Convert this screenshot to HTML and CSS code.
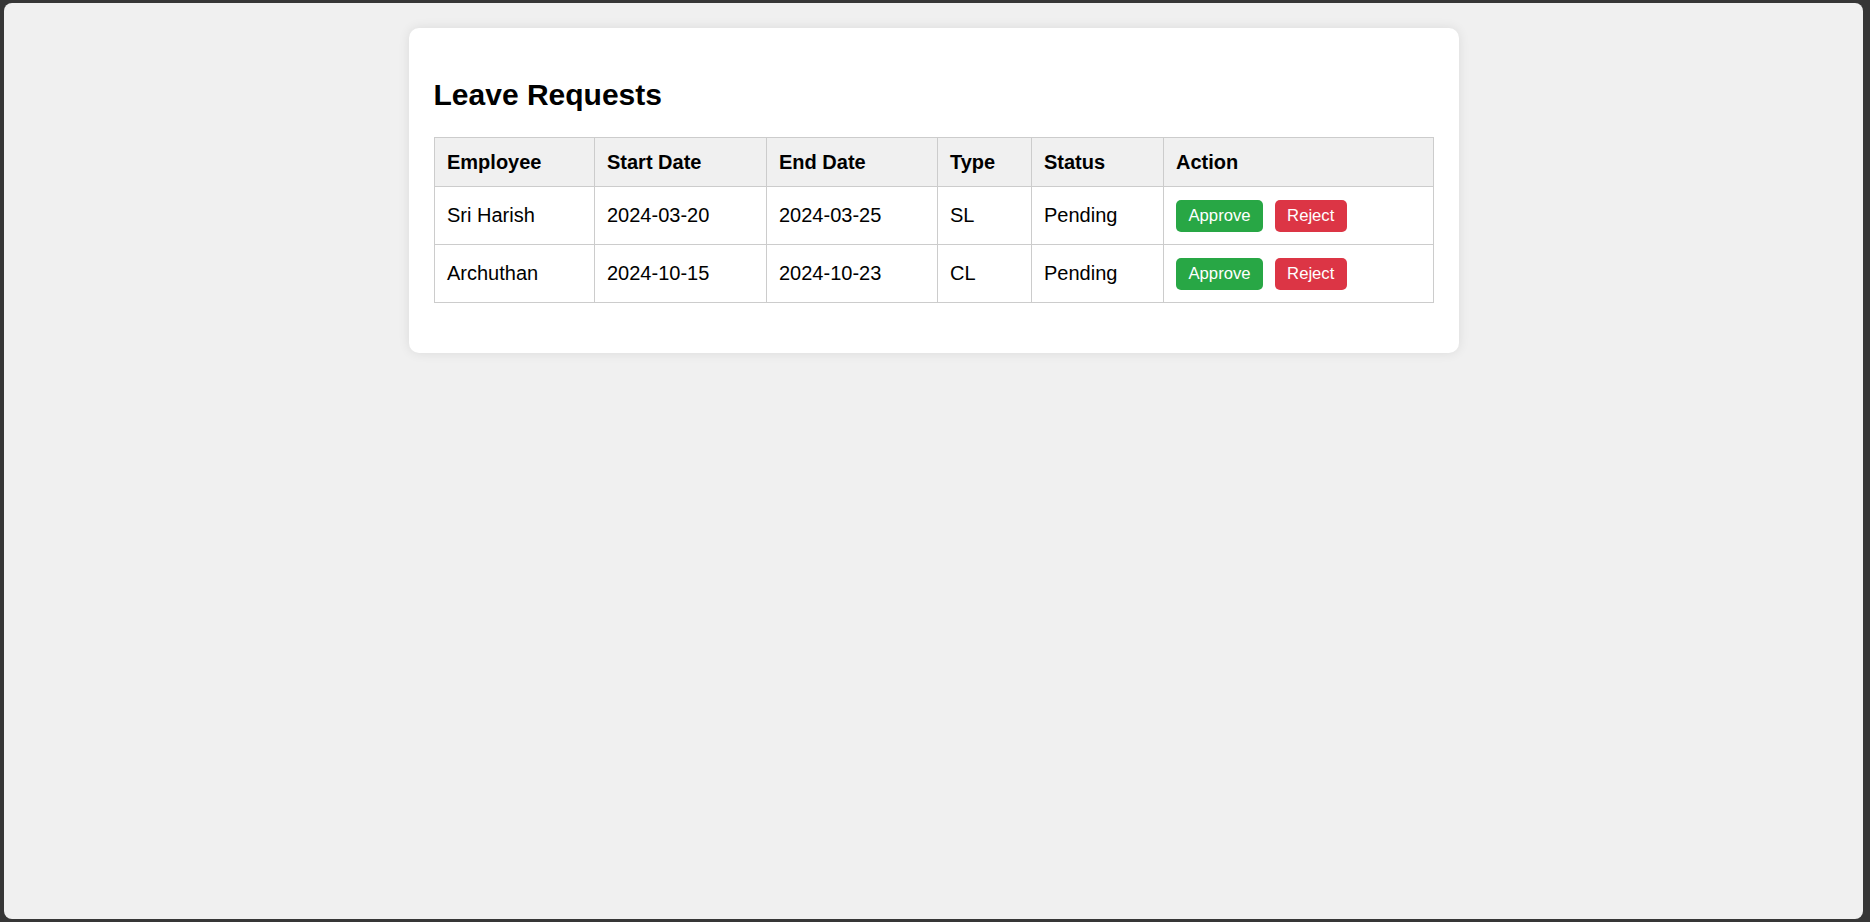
FILE: index.html
```html
<!DOCTYPE html>
<html lang="en">
<head>
<meta charset="utf-8">
<title>Leave Requests</title>
<link rel="stylesheet" href="styles.css">
</head>
<body>
<div class="frame">
  <div class="card">
    <h2 class="title">Leave Requests</h2>
    <table class="requests">
      <colgroup>
        <col class="c-emp">
        <col class="c-start">
        <col class="c-end">
        <col class="c-type">
        <col class="c-status">
        <col class="c-action">
      </colgroup>
      <thead>
        <tr>
          <th>Employee</th>
          <th>Start Date</th>
          <th>End Date</th>
          <th>Type</th>
          <th>Status</th>
          <th>Action</th>
        </tr>
      </thead>
      <tbody>
        <tr>
          <td>Sri Harish</td>
          <td>2024-03-20</td>
          <td>2024-03-25</td>
          <td>SL</td>
          <td>Pending</td>
          <td><button class="btn btn-approve">Approve</button> <button class="btn btn-reject">Reject</button></td>
        </tr>
        <tr>
          <td>Archuthan</td>
          <td>2024-10-15</td>
          <td>2024-10-23</td>
          <td>CL</td>
          <td>Pending</td>
          <td><button class="btn btn-approve">Approve</button> <button class="btn btn-reject">Reject</button></td>
        </tr>
      </tbody>
    </table>
  </div>
</div>
</body>
</html>
```

FILE: styles.css
```css
html, body {
  margin: 0;
  padding: 0;
  height: 100%;
  background: #363636;
}

body {
  padding: 3px 7px 3px 4px;
  box-sizing: border-box;
  font-family: "Liberation Sans", Arial, sans-serif;
}

.frame {
  height: 100%;
  background: #f0f0f0;
  border-radius: 8px;
  padding-top: 25px;
  box-sizing: border-box;
  overflow: hidden;
}

.card {
  width: 1050px;
  box-sizing: border-box;
  margin: 0 auto;
  padding: 25px;
  background: #ffffff;
  border-radius: 10px;
  box-shadow: 0 0 12px rgba(0, 0, 0, 0.09);
}

.title {
  margin: 25px 0;
  font-size: 30px;
  font-weight: bold;
  color: #000;
}

.requests {
  width: 100%;
  border-collapse: collapse;
  table-layout: fixed;
  font-size: 20px;
  color: #000;
  margin-bottom: 25px;
}

.c-emp { width: 160px; }
.c-start { width: 172px; }
.c-end { width: 171px; }
.c-type { width: 94px; }
.c-status { width: 132px; }
.c-action { width: auto; }

.requests th,
.requests td {
  border: 1px solid #cccccc;
  padding: 12.5px 12.5px;
  text-align: left;
  vertical-align: middle;
}

.requests th {
  background: #f0f0f0;
  font-weight: bold;
}

.btn {
  font-family: "Liberation Sans", Arial, sans-serif;
  font-size: 16.67px;
  line-height: 19px;
  color: #ffffff;
  border: none;
  border-radius: 5px;
  padding: 6.5px 12.5px;
  margin: 0 6px 0 0;
  cursor: pointer;
}

.btn-approve { background: #28a745; }
.btn-reject { background: #dc3545; }
```
